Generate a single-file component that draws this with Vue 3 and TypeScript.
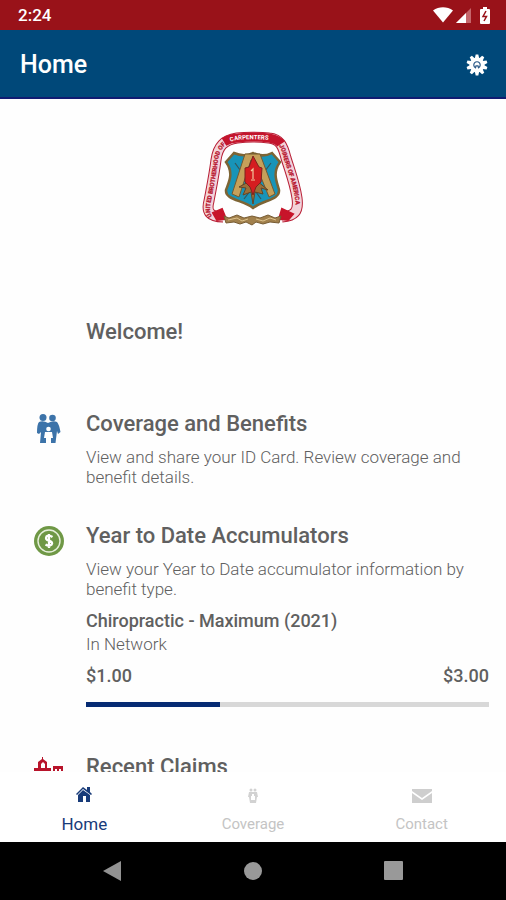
<script setup lang="ts">
interface Accumulator {
  title: string
  network: string
  used: number
  limit: number
}

const accumulator: Accumulator = {
  title: 'Chiropractic - Maximum (2021)',
  network: 'In Network',
  used: 1,
  limit: 3,
}

const money = (value: number): string => `$${value.toFixed(2)}`
const progress = `${(accumulator.used / accumulator.limit) * 100}%`
const ribbon = 'M30 95C17 95 13 90 16 79C18 68 21 54 23 38C25 24 31 18 44 16C52 15 68 15 76 16C87 17 90 24 93 36C98 52 102 62 104 76C106 90 101 94 89 95'
</script>

<template>
  <div class="screen">
    <div class="status">
      <span>2:24</span>
      <div class="status-icons">
        <svg width="20" height="16" viewBox="0 0 20 16" aria-hidden="true">
          <path d="M0 3.5C6-.7 14-.7 20 3.5L10 15.5Z" fill="#fff" />
        </svg>
        <svg width="15" height="15" viewBox="0 0 15 15" aria-hidden="true">
          <path d="M0 15L15 0V15Z" fill="#c5666b" />
          <path d="M0 15L10 5V15Z" fill="#fff" />
        </svg>
        <svg class="battery" width="10" height="17" viewBox="0 0 10 17" aria-hidden="true">
          <path d="M3 0H7V2H9Q10 2 10 3V16Q10 17 9 17H1Q0 17 0 16V3Q0 2 1 2H3Z" fill="#fff" />
          <path d="M6 4L3 9.5H6.5L4 14" fill="none" stroke="#991219" stroke-width="1.5" />
        </svg>
      </div>
    </div>

    <header class="app-bar">
      <h1>Home</h1>
      <button class="settings" type="button" aria-label="Settings">
        <svg width="22" height="22" viewBox="-11 -11 22 22" aria-hidden="true">
          <g fill="#fff">
            <circle r="7.5" />
            <path v-for="n in 10" :key="n" d="M-2.2 -6.5L-1.3 -10.5H1.3L2.2 -6.5Z" :transform="`rotate(${n * 36})`" />
          </g>
          <path d="M-1.5 2.8A3.2 3.2 0 1 1 1.5 2.8L1 .8H-1Z" fill="none" stroke="#2c5b89" stroke-width="1.2" />
        </svg>
      </button>
    </header>

    <main class="content">
      <svg class="emblem" width="120" height="112" viewBox="0 0 120 112" role="img" aria-label="Carpenters union emblem">
        <defs>
          <path id="ribbon-text" d="M30 97C18 97 15 92 18 79C20 68 23 54 25 38C27 26 33 20 44 18C52 17 68 17 76 18C86 19 88 26 91 37C96 52 100 62 102 76C104 90 100 96 89 97" />
        </defs>
        <path :d="ribbon" fill="none" stroke="#b81f36" stroke-width="11" />
        <path :d="ribbon" fill="none" stroke="#f3d3d9" stroke-width="9" />
        <path d="M31 20C36 17 41 16 45 16C54 15 68 15 76 16C82 17 86 19 88 22" fill="none" stroke="#c4142c" stroke-width="9" />
        <path d="M20 91L29 87L33 97L24 98ZM89 87L100 92L95 98L86 97Z" fill="#c7142a" stroke="#c7142a" stroke-width="2" />
        <text class="ribbon ribbon-red">
          <textPath href="#ribbon-text" startOffset="5%">UNITED BROTHERHOOD OF</textPath>
        </text>
        <text class="ribbon ribbon-white">
          <textPath href="#ribbon-text" startOffset="49%" text-anchor="middle">CARPENTERS</textPath>
        </text>
        <text class="ribbon ribbon-red">
          <textPath href="#ribbon-text" startOffset="63%">JOINERS OF AMERICA</textPath>
        </text>
        <path d="M41 31C48 34 54 34 60 31C66 34 73 34 79 31L87 40C79 51 84 60 86 68C87 78 70 78 60 86C50 78 32 78 33 68C36 60 41 51 33 40Z" fill="#1894b8" stroke="#7d6434" stroke-width="2.5" />
        <path d="M42 41L68 77M78 41L51 77" stroke="#34565c" stroke-width="1.2" />
        <path d="M52 32H67L82 72L76 75L61 38H58L46 75L39 72Z" fill="#c5a05a" stroke="#725a31" />
        <path d="M46 65L57 59L60 67L64 59L75 68L68 66L70 72L62 70L60 82L58 70L50 73L53 66Z" fill="#9b7039" stroke="#624627" />
        <path d="M60 34L66 45L69 46L68 60L63 65L60 73L57 65L52 60V46L56 45Z" fill="#d51d20" stroke="#7c241f" />
        <path d="M58 49L60 47V57M58 58H62" fill="none" stroke="#f1c99f" stroke-width="1.2" />
        <path d="M31 94L36 96L44 93L51 96L59 94L67 96L75 93L82 96L88 94L86 101L77 100L70 102L63 100L59 103L53 100L47 102L41 100L33 101Z" fill="#a1804c" stroke="#765b33" />
        <path d="M35 98L44 96L49 99L55 97M63 97L70 99L77 96L83 98" fill="none" stroke="#dfc48d" />
      </svg>

      <h2 class="welcome">Welcome!</h2>

      <section class="row">
        <svg class="row-icon" width="30" height="30" viewBox="0 0 30 30" aria-hidden="true">
          <g fill="#3c73a9">
            <circle cx="9" cy="3.5" r="3.5" />
            <circle cx="18.5" cy="4" r="3.3" />
            <path d="M5 8Q9 6 14 9Q19 6 23 8Q25 10 26.5 18L24 20L23 17L21.5 29H16V19H13V29H6L7 18L5 20L3 19Q3 10 5 8Z" />
          </g>
          <circle cx="14.5" cy="15" r="2.3" fill="#fff" />
          <path d="M11 18H18L19 24H17V29H15V25H14V29H12V24H10Z" fill="#fff" />
        </svg>
        <div class="row-body">
          <h2>Coverage and Benefits</h2>
          <p>View and share your ID Card. Review coverage and benefit details.</p>
        </div>
      </section>

      <section class="row">
        <svg class="row-icon" width="30" height="30" viewBox="0 0 30 30" aria-hidden="true">
          <circle cx="15" cy="15" r="15" fill="#6f9846" />
          <circle cx="15" cy="15" r="11" fill="none" stroke="#e7f0dc" stroke-width="1.4" />
          <path d="M18.5 11Q15 8.5 12.5 10.5Q10.8 13.5 15 14.7Q19.5 16.2 17.5 18.7Q15 20.8 11.5 18.5M15 8V22" fill="none" stroke="#fff" stroke-width="2.3" />
        </svg>
        <div class="row-body">
          <h2>Year to Date Accumulators</h2>
          <p>View your Year to Date accumulator information by benefit type.</p>
          <h3>{{ accumulator.title }}</h3>
          <p class="network">{{ accumulator.network }}</p>
          <div class="amounts">
            <span>{{ money(accumulator.used) }}</span>
            <span>{{ money(accumulator.limit) }}</span>
          </div>
          <div class="track" role="progressbar" aria-label="Chiropractic maximum used" :aria-valuenow="accumulator.used" aria-valuemin="0" :aria-valuemax="accumulator.limit">
            <div class="fill" :style="{ width: progress }"></div>
          </div>
        </div>
      </section>

      <section class="row claims">
        <svg class="row-icon" width="30" height="30" viewBox="0 0 30 30" aria-hidden="true">
          <path d="M8 0H9V2L13 5V11H17V14H0V11H4V5L8 2ZM7 7V11H11V7L9 5ZM19 9H29V14H27V12H25V14H23V12H21V14H19Z" fill="#b8142b" fill-rule="evenodd" />
          <path d="M2 16H28V28H2Z" fill="#b8142b" />
        </svg>
        <div class="row-body">
          <h2>Recent Claims</h2>
        </div>
      </section>
    </main>

    <nav class="tabs" aria-label="Main">
      <a class="tab active" href="#home" aria-current="page">
        <svg width="18" height="18" viewBox="0 0 18 18" aria-hidden="true">
          <path d="M8 1L12 4V1H15V6L17 8L16 9L8 3L2 9L1 8Z" fill="#183b79" />
          <path d="M3 9L8 4L15 9V16H11V10H8V16H3Z" fill="#183b79" />
        </svg>
        <span>Home</span>
      </a>
      <a class="tab" href="#coverage">
        <svg width="18" height="18" viewBox="0 0 18 18" aria-hidden="true">
          <g fill="#d2d2d2">
            <circle cx="7" cy="4" r="1.5" />
            <circle cx="11" cy="4" r="1.5" />
            <path d="M5 6H13L14 11H13L12 17H6L5 11H4Z" />
          </g>
          <path d="M8 8H10V10H11V14H7V10H8Z" fill="#fff" />
        </svg>
        <span>Coverage</span>
      </a>
      <a class="tab" href="#contact">
        <svg width="22" height="18" viewBox="0 0 22 18" aria-hidden="true">
          <path d="M1 3H21V5L11 12L1 5ZM1 7L11 14L21 7V17H1Z" fill="#cecece" />
        </svg>
        <span>Contact</span>
      </a>
    </nav>

    <div class="system-bar">
      <button type="button" aria-label="Back">
        <svg width="20" height="20" viewBox="0 0 20 20" aria-hidden="true"><path d="M0 10L18 0V20Z" fill="#929292" /></svg>
      </button>
      <button type="button" aria-label="Home screen">
        <svg width="20" height="20" viewBox="0 0 20 20" aria-hidden="true"><circle cx="10" cy="10" r="9" fill="#999" /></svg>
      </button>
      <button type="button" aria-label="Recent apps">
        <svg width="20" height="20" viewBox="0 0 20 20" aria-hidden="true"><rect width="19" height="19" x="1" rx="1" fill="#999" /></svg>
      </button>
    </div>
  </div>
</template>

<style>
body {
  margin: 0;
}
</style>

<style scoped>
.screen {
  display: flex;
  flex-direction: column;
  height: 100vh;
  overflow: hidden;
  background: #fefefe;
  color: #606060;
  font-family: Roboto, "Liberation Sans", sans-serif;
}

h1, h2, h3, p {
  margin: 0;
}

button {
  display: flex;
  padding: 0;
  border: 0;
  background: none;
}

.status {
  display: flex;
  flex: none;
  align-items: center;
  justify-content: space-between;
  height: 30px;
  padding: 0 16px 0 18px;
  background: #991219;
  color: #fff;
  font-size: 17px;
  font-weight: 500;
}

.status-icons {
  display: flex;
  align-items: center;
  gap: 3px;
}

.battery {
  margin-left: 6px;
}

.app-bar {
  display: flex;
  flex: none;
  align-items: center;
  justify-content: space-between;
  box-sizing: border-box;
  height: 69px;
  padding: 2px 18px 0 20px;
  border-bottom: 2px solid #101c72;
  background: #004879;
  color: #fff;
}

.app-bar h1 {
  font-size: 25px;
  font-weight: 500;
}

.content {
  flex: 1;
  min-height: 0;
  overflow: hidden;
  padding: 0 17px 0 34px;
}

.emblem {
  display: block;
  margin: 23px auto 0;
  padding-right: 17px;
}

.ribbon {
  font-size: 6px;
  font-weight: 700;
}

.ribbon-red {
  fill: #b81931;
  stroke: #b81931;
  stroke-width: 0.3;
}

.ribbon-white {
  fill: #fff;
}

.welcome {
  margin: 84px 0 64px 52px;
}

h2 {
  font-size: 22px;
  font-weight: 500;
  line-height: 28px;
}

.row {
  display: flex;
  gap: 22px;
  margin-bottom: 35px;
}

.row-icon {
  flex: none;
  margin-top: 4px;
}

.row-body {
  flex: 1;
  min-width: 0;
}

p {
  margin-top: 9px;
  color: #606060;
  font-size: 17px;
  font-weight: 300;
  line-height: 20px;
}

h3 {
  margin-top: 10px;
  font-size: 18px;
  font-weight: 500;
  line-height: 24px;
}

.network {
  margin-top: 1px;
}

.amounts {
  display: flex;
  justify-content: space-between;
  margin-top: 10px;
  font-size: 18px;
  font-weight: 500;
  line-height: 24px;
}

.track {
  height: 5px;
  margin-top: 14px;
  background: #d8d8d8;
}

.fill {
  height: 100%;
  background: #062b73;
}

.claims {
  margin-top: 46px;
}

.tabs {
  display: grid;
  flex: none;
  grid-template-columns: repeat(3, 1fr);
  height: 70px;
  background: #fff;
}

.tab {
  display: flex;
  flex-direction: column;
  align-items: center;
  gap: 9px;
  padding-top: 14px;
  color: #c4c4c4;
  font-size: 15px;
  font-weight: 400;
  line-height: 22px;
  text-decoration: none;
}

.active {
  color: #183b79;
  font-size: 17px;
}

.system-bar {
  display: flex;
  flex: none;
  align-items: center;
  justify-content: center;
  gap: 120px;
  height: 58px;
  background: #000;
}
</style>
